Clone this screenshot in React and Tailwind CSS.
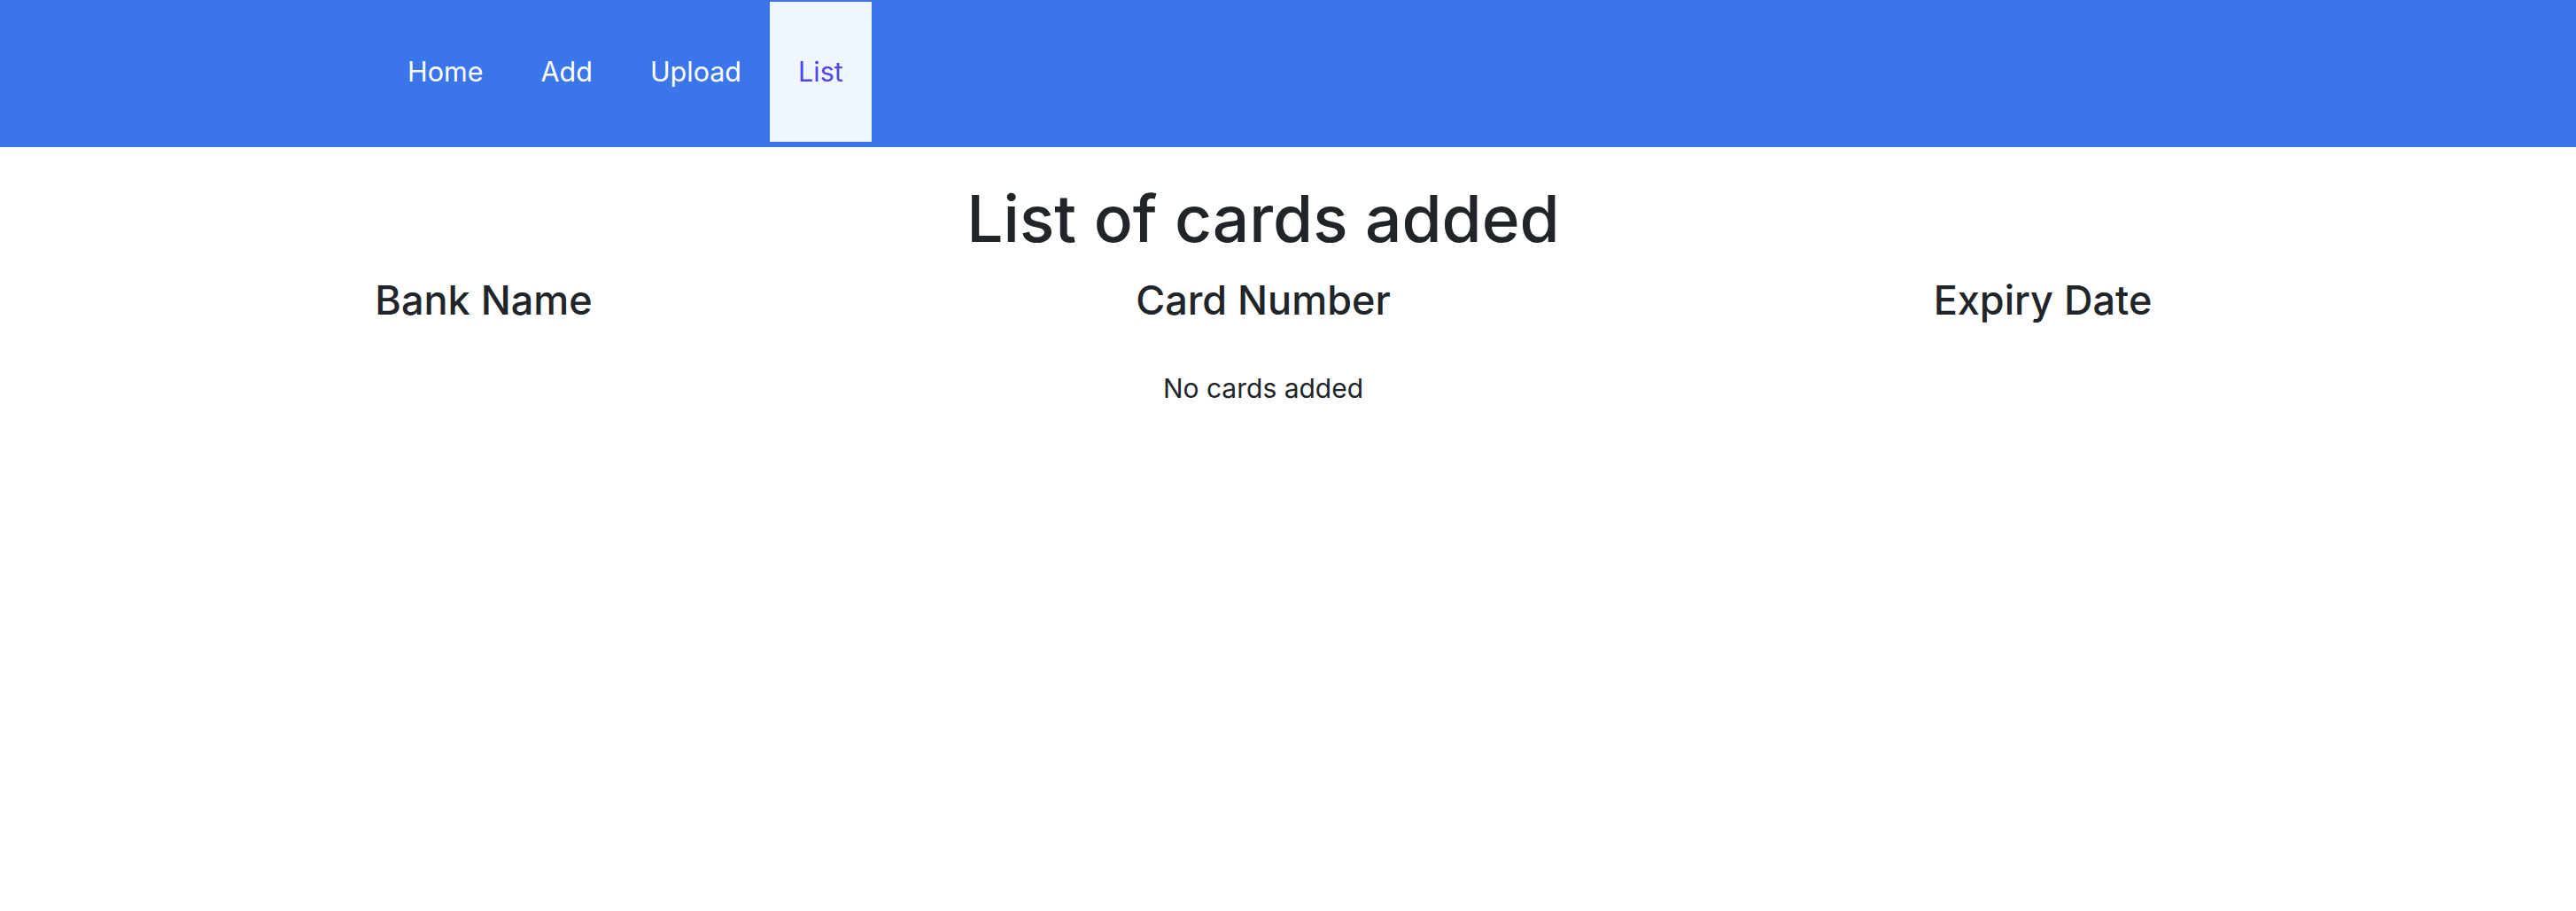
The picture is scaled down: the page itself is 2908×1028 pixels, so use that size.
export default function App() {
  const font = { fontFamily: 'Inter, "Noto Sans", sans-serif' };
  return (
    <div className="min-h-[1028px] bg-white text-[#212529]" style={font}>
      <nav className="h-[166px] bg-[#3a76e9] flex items-start">
        <ul className="flex items-stretch ml-[428px] mt-[2px] h-[158px]">
          <li className="px-[32px] flex items-center text-white text-[30.5px]">Home</li>
          <li className="px-[33px] flex items-center text-white text-[30.5px]">Add</li>
          <li className="px-[32px] flex items-center text-white text-[30.5px]">Upload</li>
          <li className="px-[32px] flex items-center bg-[#f0f6fe] text-[#4d47e6] text-[30.5px]">List</li>
        </ul>
      </nav>
      <div className="ml-[106px] w-[2640px]">
        <h1 className="text-center text-[73px] leading-[92px] mt-[35px] font-medium">List of cards added</h1>
        <div className="grid grid-cols-3 mt-[17px]">
          <h4 className="text-center text-[45px] leading-[58px] font-medium">Bank Name</h4>
          <h4 className="text-center text-[45px] leading-[58px] font-medium">Card Number</h4>
          <h4 className="text-center text-[45px] leading-[58px] font-medium">Expiry Date</h4>
        </div>
        <p className="text-center text-[30px] leading-[48px] mt-[46px]">No cards added</p>
      </div>
    </div>
  );
}
